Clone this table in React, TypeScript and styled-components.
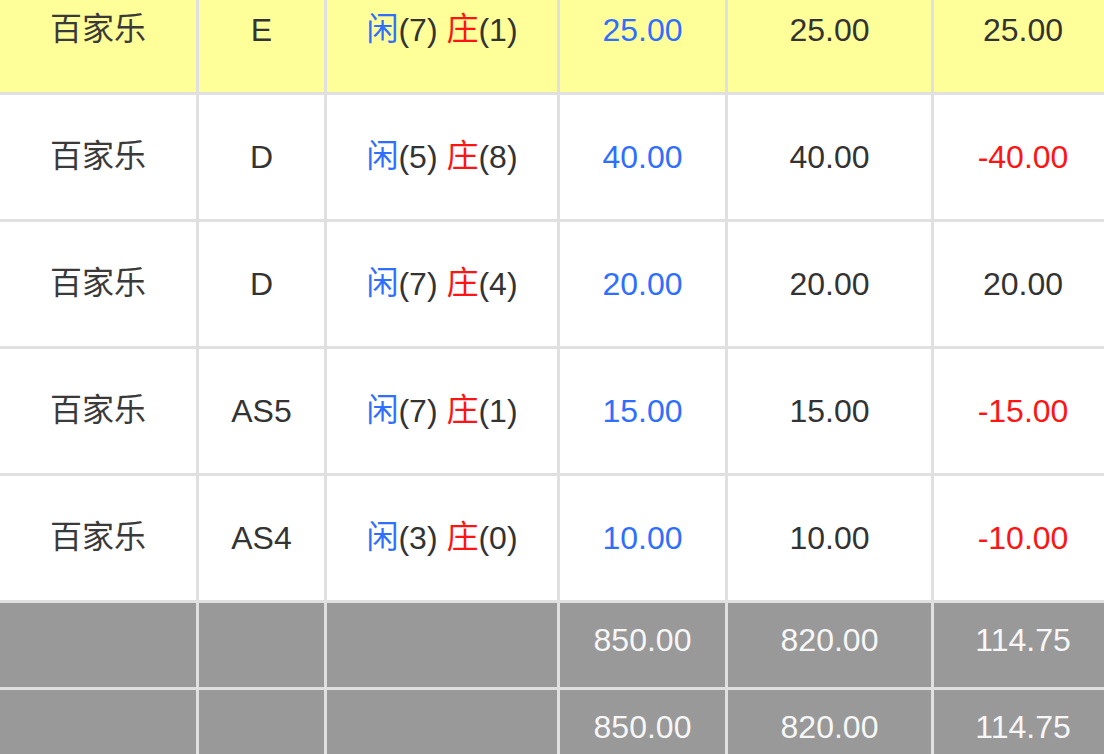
import styled, { createGlobalStyle } from "styled-components";

const GlobalStyle = createGlobalStyle`
	html, body {
		margin: 0;
		padding: 0;
		background: #ffffff;
		overflow: hidden;
	}
	body {
		font-family: "Liberation Sans", Arial, "Noto Sans CJK SC", sans-serif;
	}
`;

const Viewport = styled.div`
	width: 1104px;
	height: 754px;
	overflow: hidden;
`;

const Table = styled.table`
	border-collapse: separate;
	border-spacing: 3px;
	background: #e0e0e0;
	table-layout: fixed;
	margin: -35px 0 0 -3px;
	width: 1118px;
`;

const Row = styled.tr<{ $tone?: "yellow" | "white" | "total" }>`
	td {
		background: ${(p) =>
			p.$tone === "yellow" ? "#ffff99" : p.$tone === "total" ? "#999999" : "#ffffff"};
		height: ${(p) => (p.$tone === "total" ? "84px" : "124px")};
		color: ${(p) => (p.$tone === "total" ? "#f7f7f7" : "#333333")};
		padding-bottom: ${(p) => (p.$tone === "total" ? "10px" : "1px")};
	}
`;

const Cell = styled.td<{ $color?: string }>`
	padding: 0;
	box-sizing: border-box;
	text-align: center;
	vertical-align: middle;
	font-size: 32px;
	line-height: 36px;
	white-space: nowrap;
	${(p) => (p.$color ? `color: ${p.$color} !important;` : "")}
`;

const Cjk = styled.span<{ $color?: string }>`
	display: inline-block;
	transform: translateY(-1px);
	${(p) => (p.$color ? `color: ${p.$color};` : "color: #3a3a3a;")}
`;

const BLUE = "#2f6fff";
const RED = "#ff1414";

type Bet = {
	game: string;
	table: string;
	player: number;
	banker: number;
	bet: string;
	valid: string;
	win: string;
};

const bets: Bet[] = [
	{ game: "百家乐", table: "E", player: 7, banker: 1, bet: "25.00", valid: "25.00", win: "25.00" },
	{ game: "百家乐", table: "D", player: 5, banker: 8, bet: "40.00", valid: "40.00", win: "-40.00" },
	{ game: "百家乐", table: "D", player: 7, banker: 4, bet: "20.00", valid: "20.00", win: "20.00" },
	{ game: "百家乐", table: "AS5", player: 7, banker: 1, bet: "15.00", valid: "15.00", win: "-15.00" },
	{ game: "百家乐", table: "AS4", player: 3, banker: 0, bet: "10.00", valid: "10.00", win: "-10.00" },
];

const totals = [
	{ bet: "850.00", valid: "820.00", win: "114.75" },
	{ bet: "850.00", valid: "820.00", win: "114.75" },
];

export default function App() {
	return (
		<Viewport>
			<GlobalStyle />
			<Table>
				<colgroup>
					<col style={{ width: 196 }} />
					<col style={{ width: 125 }} />
					<col style={{ width: 230 }} />
					<col style={{ width: 165 }} />
					<col style={{ width: 203 }} />
					<col style={{ width: 178 }} />
				</colgroup>
				<tbody>
					{bets.map((b, i) => (
						<Row key={i} $tone={i === 0 ? "yellow" : "white"}>
							<Cell>
								<Cjk>{b.game}</Cjk>
							</Cell>
							<Cell>{b.table}</Cell>
							<Cell>
								<Cjk $color={BLUE}>闲</Cjk>({b.player}) <Cjk $color={RED}>庄</Cjk>({b.banker})
							</Cell>
							<Cell $color={BLUE}>{b.bet}</Cell>
							<Cell>{b.valid}</Cell>
							<Cell $color={b.win.startsWith("-") ? RED : undefined}>{b.win}</Cell>
						</Row>
					))}
					{totals.map((t, i) => (
						<Row key={"t" + i} $tone="total">
							<Cell />
							<Cell />
							<Cell />
							<Cell>{t.bet}</Cell>
							<Cell>{t.valid}</Cell>
							<Cell>{t.win}</Cell>
						</Row>
					))}
				</tbody>
			</Table>
		</Viewport>
	);
}
